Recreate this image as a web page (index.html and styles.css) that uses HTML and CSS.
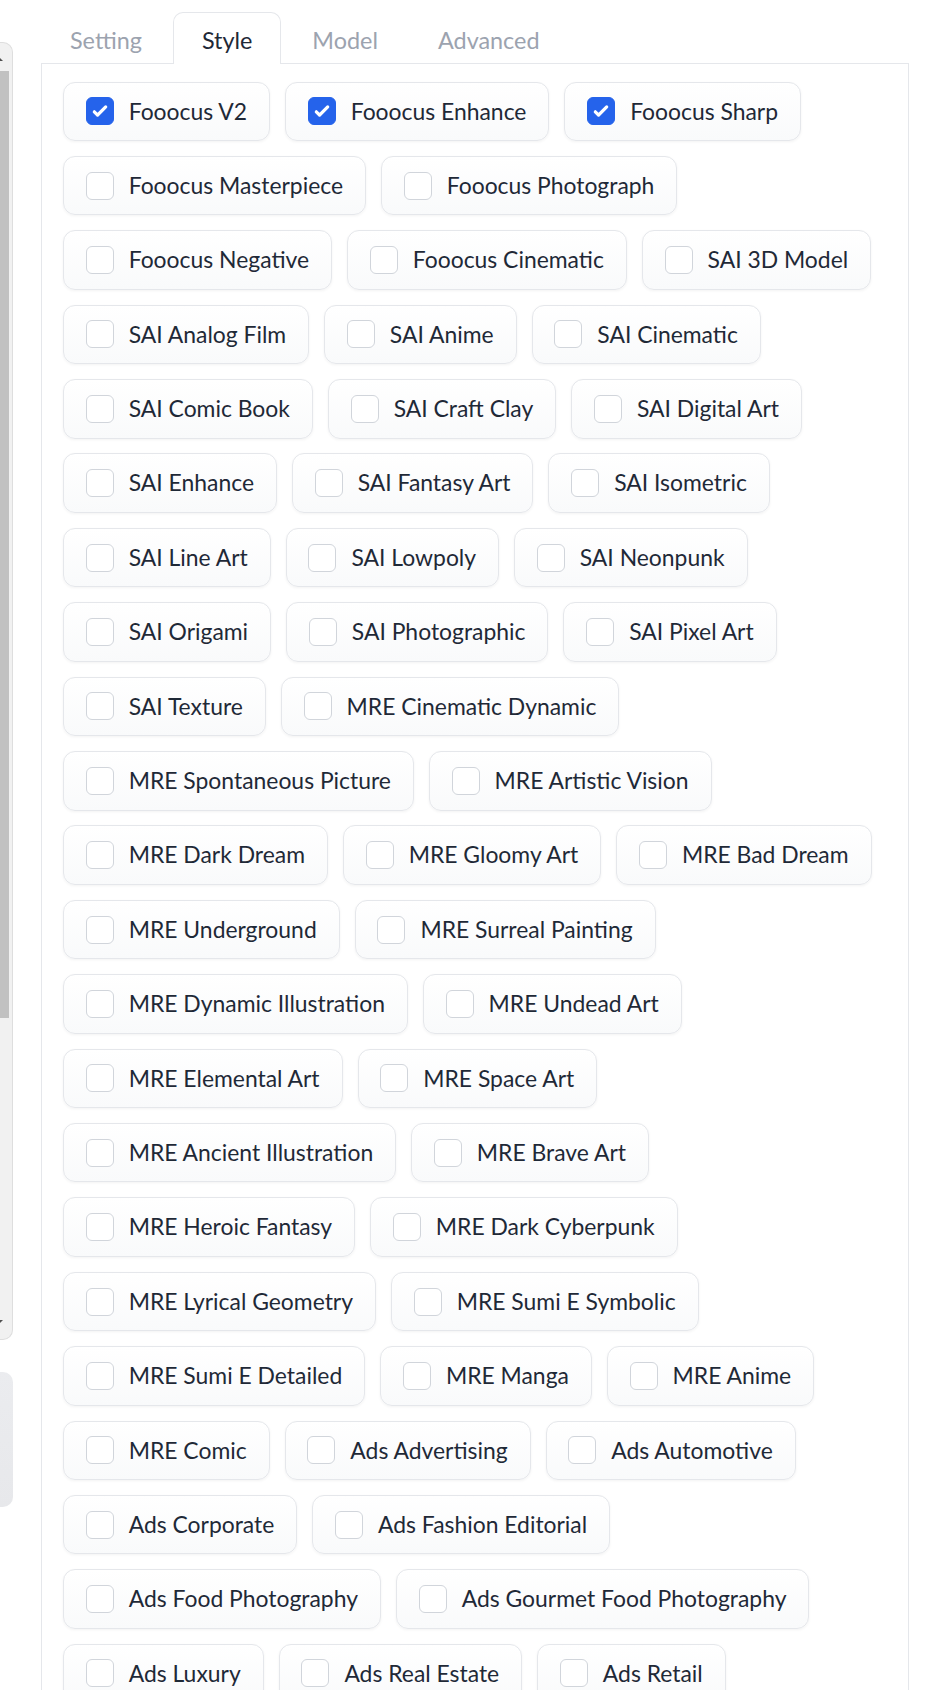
FILE: index.html
```html
<!DOCTYPE html>
<html lang="en">
<head>
<meta charset="utf-8">
<title>Style</title>
<link rel="stylesheet" href="styles.css">
</head>
<body>
<div class="page">
  <aside class="side">
    <div class="scrollbox">
      <div class="sbar">
        <span class="arrow up"></span>
        <div class="thumb"></div>
        <span class="sb-space"></span>
        <span class="arrow down"></span>
      </div>
    </div>
    <div class="sidecard"></div>
  </aside>
  <main class="main">
    <nav class="tabs">
      <button class="tab">Setting</button>
      <button class="tab active">Style</button>
      <button class="tab">Model</button>
      <button class="tab">Advanced</button>
    </nav>
    <section class="panel">
      <label class="chip"><span class="box checked"><svg viewBox="0 0 16 16"><path d="M12.207 4.793a1 1 0 010 1.414l-5 5a1 1 0 01-1.414 0l-2-2a1 1 0 011.414-1.414L6.5 9.086l4.293-4.293a1 1 0 011.414 0z"/></svg></span><span class="lbl">Fooocus V2</span></label>
      <label class="chip"><span class="box checked"><svg viewBox="0 0 16 16"><path d="M12.207 4.793a1 1 0 010 1.414l-5 5a1 1 0 01-1.414 0l-2-2a1 1 0 011.414-1.414L6.5 9.086l4.293-4.293a1 1 0 011.414 0z"/></svg></span><span class="lbl">Fooocus Enhance</span></label>
      <label class="chip"><span class="box checked"><svg viewBox="0 0 16 16"><path d="M12.207 4.793a1 1 0 010 1.414l-5 5a1 1 0 01-1.414 0l-2-2a1 1 0 011.414-1.414L6.5 9.086l4.293-4.293a1 1 0 011.414 0z"/></svg></span><span class="lbl">Fooocus Sharp</span></label>
      <label class="chip"><span class="box"></span><span class="lbl">Fooocus Masterpiece</span></label>
      <label class="chip"><span class="box"></span><span class="lbl">Fooocus Photograph</span></label>
      <label class="chip"><span class="box"></span><span class="lbl">Fooocus Negative</span></label>
      <label class="chip"><span class="box"></span><span class="lbl">Fooocus Cinematic</span></label>
      <label class="chip"><span class="box"></span><span class="lbl">SAI 3D Model</span></label>
      <label class="chip"><span class="box"></span><span class="lbl">SAI Analog Film</span></label>
      <label class="chip"><span class="box"></span><span class="lbl">SAI Anime</span></label>
      <label class="chip"><span class="box"></span><span class="lbl">SAI Cinematic</span></label>
      <label class="chip"><span class="box"></span><span class="lbl">SAI Comic Book</span></label>
      <label class="chip"><span class="box"></span><span class="lbl">SAI Craft Clay</span></label>
      <label class="chip"><span class="box"></span><span class="lbl">SAI Digital Art</span></label>
      <label class="chip"><span class="box"></span><span class="lbl">SAI Enhance</span></label>
      <label class="chip"><span class="box"></span><span class="lbl">SAI Fantasy Art</span></label>
      <label class="chip"><span class="box"></span><span class="lbl">SAI Isometric</span></label>
      <label class="chip"><span class="box"></span><span class="lbl">SAI Line Art</span></label>
      <label class="chip"><span class="box"></span><span class="lbl">SAI Lowpoly</span></label>
      <label class="chip"><span class="box"></span><span class="lbl">SAI Neonpunk</span></label>
      <label class="chip"><span class="box"></span><span class="lbl">SAI Origami</span></label>
      <label class="chip"><span class="box"></span><span class="lbl">SAI Photographic</span></label>
      <label class="chip"><span class="box"></span><span class="lbl">SAI Pixel Art</span></label>
      <label class="chip"><span class="box"></span><span class="lbl">SAI Texture</span></label>
      <label class="chip"><span class="box"></span><span class="lbl">MRE Cinematic Dynamic</span></label>
      <label class="chip"><span class="box"></span><span class="lbl">MRE Spontaneous Picture</span></label>
      <label class="chip"><span class="box"></span><span class="lbl">MRE Artistic Vision</span></label>
      <label class="chip"><span class="box"></span><span class="lbl">MRE Dark Dream</span></label>
      <label class="chip"><span class="box"></span><span class="lbl">MRE Gloomy Art</span></label>
      <label class="chip"><span class="box"></span><span class="lbl">MRE Bad Dream</span></label>
      <label class="chip"><span class="box"></span><span class="lbl">MRE Underground</span></label>
      <label class="chip"><span class="box"></span><span class="lbl">MRE Surreal Painting</span></label>
      <label class="chip"><span class="box"></span><span class="lbl">MRE Dynamic Illustration</span></label>
      <label class="chip"><span class="box"></span><span class="lbl">MRE Undead Art</span></label>
      <label class="chip"><span class="box"></span><span class="lbl">MRE Elemental Art</span></label>
      <label class="chip"><span class="box"></span><span class="lbl">MRE Space Art</span></label>
      <label class="chip"><span class="box"></span><span class="lbl">MRE Ancient Illustration</span></label>
      <label class="chip"><span class="box"></span><span class="lbl">MRE Brave Art</span></label>
      <label class="chip"><span class="box"></span><span class="lbl">MRE Heroic Fantasy</span></label>
      <label class="chip"><span class="box"></span><span class="lbl">MRE Dark Cyberpunk</span></label>
      <label class="chip"><span class="box"></span><span class="lbl">MRE Lyrical Geometry</span></label>
      <label class="chip"><span class="box"></span><span class="lbl">MRE Sumi E Symbolic</span></label>
      <label class="chip"><span class="box"></span><span class="lbl">MRE Sumi E Detailed</span></label>
      <label class="chip"><span class="box"></span><span class="lbl">MRE Manga</span></label>
      <label class="chip"><span class="box"></span><span class="lbl">MRE Anime</span></label>
      <label class="chip"><span class="box"></span><span class="lbl">MRE Comic</span></label>
      <label class="chip"><span class="box"></span><span class="lbl">Ads Advertising</span></label>
      <label class="chip"><span class="box"></span><span class="lbl">Ads Automotive</span></label>
      <label class="chip"><span class="box"></span><span class="lbl">Ads Corporate</span></label>
      <label class="chip"><span class="box"></span><span class="lbl">Ads Fashion Editorial</span></label>
      <label class="chip"><span class="box"></span><span class="lbl">Ads Food Photography</span></label>
      <label class="chip"><span class="box"></span><span class="lbl">Ads Gourmet Food Photography</span></label>
      <label class="chip"><span class="box"></span><span class="lbl">Ads Luxury</span></label>
      <label class="chip"><span class="box"></span><span class="lbl">Ads Real Estate</span></label>
      <label class="chip"><span class="box"></span><span class="lbl">Ads Retail</span></label>
    </section>
  </main>
</div>
</body>
</html>
```
FILE: styles.css
```css
html, body {
  margin: 0;
  height: 100%;
  overflow: hidden;
  background: #ffffff;
}
body {
  font-family: "Lato", "Liberation Sans", sans-serif;
  color: #1f2937;
}
.page {
  display: flex;
  align-items: flex-start;
  gap: 28px;
}

/* left (clipped) column */
.side {
  flex: 0 0 13px;
  display: flex;
  flex-direction: column;
}
.scrollbox {
  margin-top: 42px;
  height: 1298px;
  box-sizing: border-box;
  border: 1px solid #dedede;
  border-left: none;
  border-radius: 0 10px 10px 0;
  background: #f1f1f1;
  overflow: hidden;
}
.sbar {
  width: 11px;
  height: 100%;
  display: flex;
  flex-direction: column;
}
.arrow {
  display: block;
  width: 0;
  height: 0;
  margin-left: -5px;
  border-left: 4px solid transparent;
  border-right: 4px solid transparent;
}
.arrow.up {
  margin-top: 14px;
  margin-bottom: 10px;
  border-bottom: 4px solid #505050;
}
.arrow.down {
  margin-top: 0;
  margin-bottom: 15px;
  border-top: 4px solid #505050;
}
.thumb {
  width: 9px;
  height: 947px;
  background: #c1c1c1;
}
.sb-space {
  flex: 1;
}
.sidecard {
  margin-top: 32px;
  width: 13px;
  height: 135px;
  border-radius: 0 10px 10px 0;
  background: linear-gradient(to bottom, #ebecef, #e7e8eb);
}

/* main */
.main {
  flex: 0 0 868px;
  display: flex;
  flex-direction: column;
}
.tabs {
  display: flex;
  gap: 2px;
  padding-top: 12px;
  margin-bottom: -1px;
  position: relative;
  z-index: 1;
}
.tab {
  height: 52px;
  box-sizing: border-box;
  padding: 3px 28px 0;
  border: 1px solid transparent;
  border-bottom: none;
  border-radius: 10px 10px 0 0;
  background: transparent;
  font-family: "Lato", "Liberation Sans", sans-serif;
  font-size: 23.4px;
  color: #9ca3af;
  display: flex;
  align-items: center;
  cursor: pointer;
}
.tab.active {
  border-color: #e5e7eb;
  background: #ffffff;
  color: #1f2937;
}
.panel {
  border: 1px solid #e5e7eb;
  padding: 17.5px 21px 20px;
  display: flex;
  flex-wrap: wrap;
  align-content: flex-start;
  gap: 14.9px 15px;
}
.chip {
  display: inline-flex;
  align-items: center;
  gap: 15px;
  height: 59.5px;
  box-sizing: border-box;
  padding: 0 22px 0 21.7px;
  border: 1px solid #e5e7eb;
  border-radius: 12px;
  background: linear-gradient(to top, #f9fafb, #ffffff);
  box-shadow: 0 1px 3px rgba(0, 0, 0, 0.05);
  font-size: 22.9px;
  line-height: 1.2;
  color: #1f2937;
  white-space: nowrap;
  cursor: pointer;
}
.box {
  flex: 0 0 28px;
  width: 28px;
  height: 28px;
  box-sizing: border-box;
  border: 1px solid #d1d5db;
  border-radius: 6px;
  background: #ffffff;
  display: flex;
  align-items: center;
  justify-content: center;
}
.box.checked {
  border-color: #2563eb;
  background: #2563eb;
}
.box svg {
  width: 28px;
  height: 28px;
  fill: #ffffff;
}
```
